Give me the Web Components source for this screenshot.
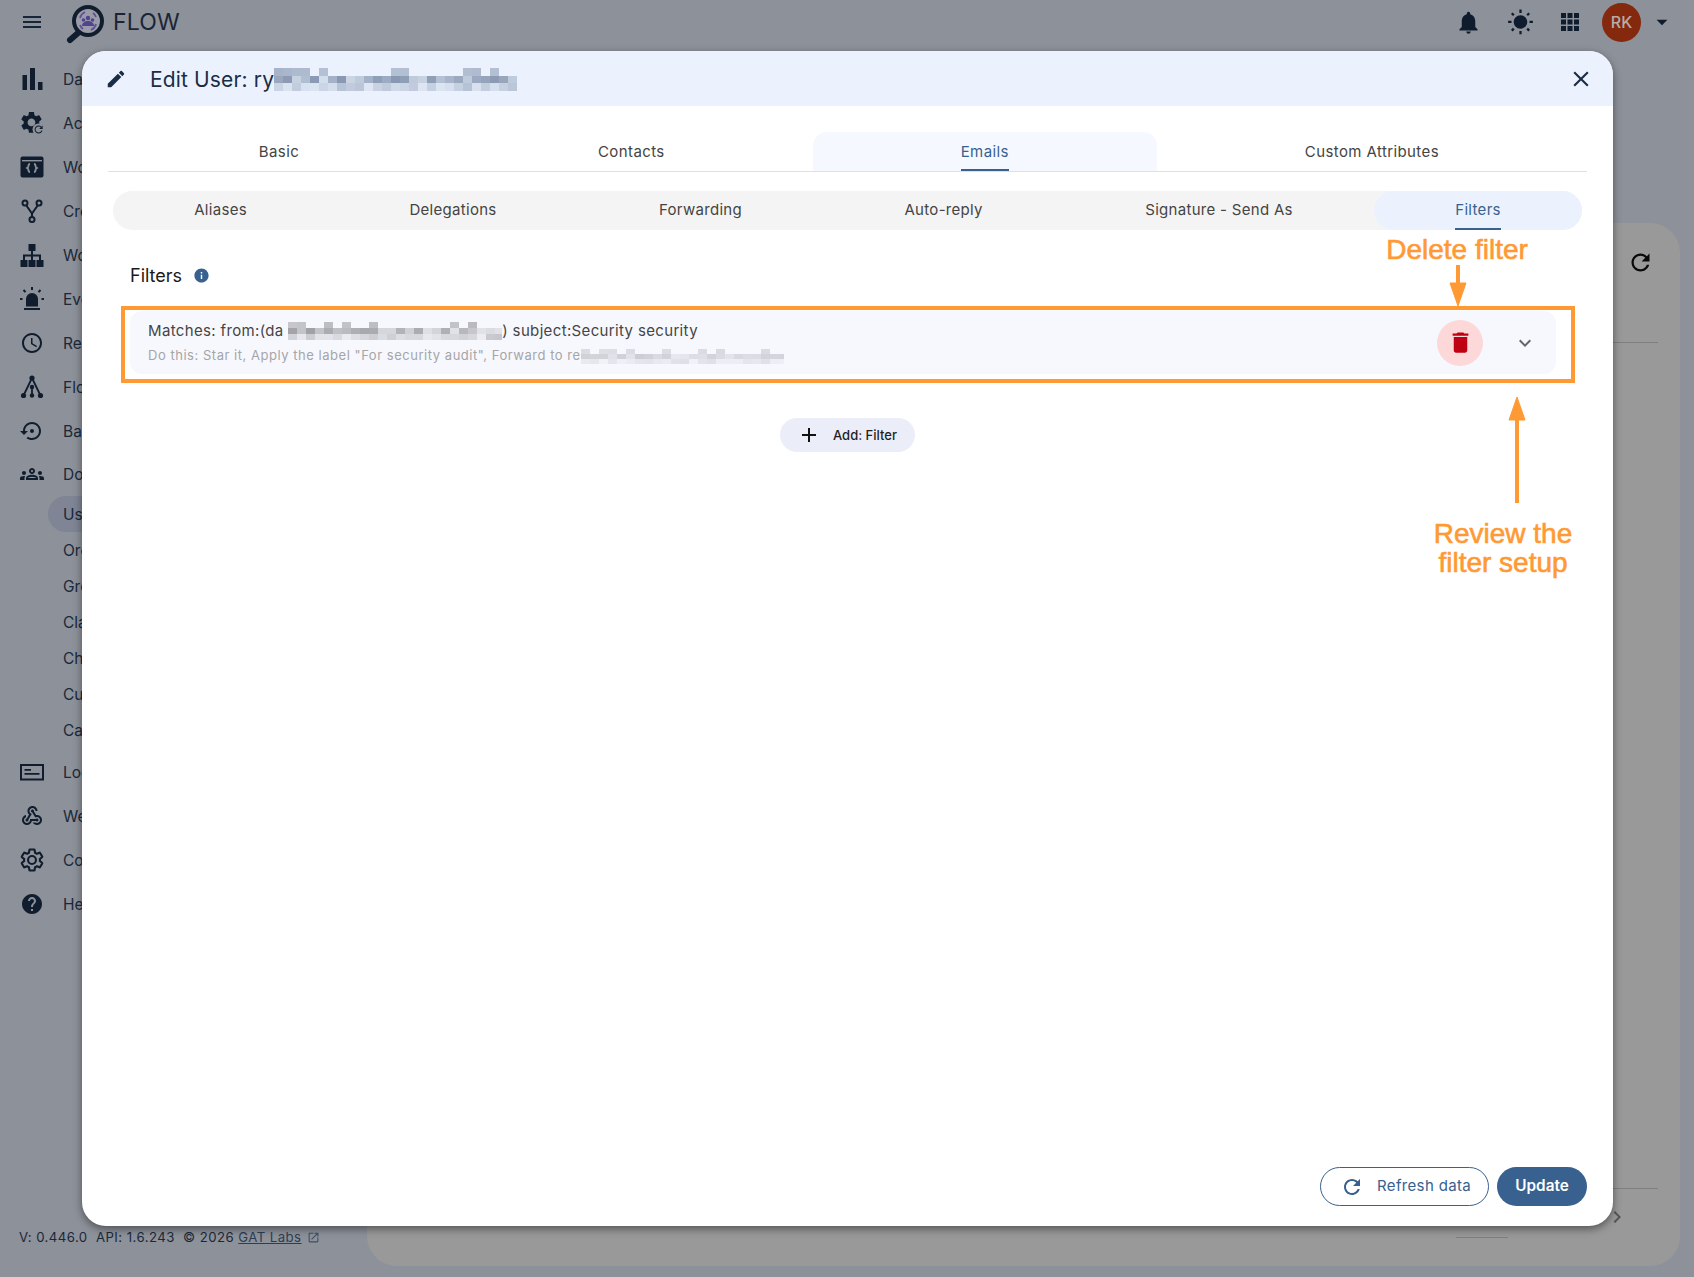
<!DOCTYPE html>
<html>
<head>
<meta charset="utf-8">
<title>FLOW</title>
<style>
html, body { margin: 0; height: 100%; overflow: hidden; background: #8d9199; }
body { font-family: Inter, "Liberation Sans", sans-serif; }
</style>
</head>
<body>
<flow-app>
    <flow-topbar slot="top"></flow-topbar>
    <flow-sidenav slot="side">
        <nav-item icon="bars">Dashboard</nav-item>
        <nav-item icon="gearrefresh">Actions</nav-item>
        <nav-item icon="code">Workflows</nav-item>
        <nav-item icon="fork">Create</nav-item>
        <nav-item icon="org">Workspace</nav-item>
        <nav-item icon="siren">Events</nav-item>
        <nav-item icon="clock">Reports</nav-item>
        <nav-item icon="tree">Flows</nav-item>
        <nav-item icon="restore">Backup</nav-item>
        <nav-item icon="groups" style="margin-top:-1px">Domain</nav-item>
        <nav-item sub active>Users</nav-item>
        <nav-item sub>Org Units</nav-item>
        <nav-item sub>Groups</nav-item>
        <nav-item sub>Classroom</nav-item>
        <nav-item sub>Chrome</nav-item>
        <nav-item sub>Custom</nav-item>
        <nav-item sub>Calendars</nav-item>
        <nav-item icon="logs" style="margin-top:2px">Logs</nav-item>
        <nav-item icon="webhook">Webhooks</nav-item>
        <nav-item icon="gearline">Configuration</nav-item>
        <nav-item icon="help">Help</nav-item>
    </flow-sidenav>
    <back-panel slot="main"></back-panel>
</flow-app>

<edit-dialog>
    <tab-bar items="Basic|Contacts|Emails|Custom Attributes" active="2"></tab-bar>
    <tab-bar pill items="Aliases|Delegations|Forwarding|Auto-reply|Signature - Send As|Filters" active="5"></tab-bar>
    <filter-list></filter-list>
</edit-dialog>

<call-outs></call-outs>

<script>
const ICON_PATHS = {
    menu: 'M3 18h18v-2H3v2zm0-5h18v-2H3v2zm0-7v2h18V6H3z',
    clock: 'M11.99 2C6.47 2 2 6.48 2 12s4.47 10 9.99 10C17.52 22 22 17.52 22 12S17.52 2 11.99 2zM12 20c-4.42 0-8-3.58-8-8s3.58-8 8-8 8 3.58 8 8-3.58 8-8 8zm.5-13H11v6l5.25 3.15.75-1.23-4.5-2.67z',
    restore: 'M14 12c0-1.1-.9-2-2-2s-2 .9-2 2 .9 2 2 2 2-.9 2-2zm-2-9c-4.97 0-9 4.03-9 9H0l4 4 4-4H5c0-3.87 3.13-7 7-7s7 3.13 7 7-3.13 7-7 7c-1.51 0-2.91-.49-4.06-1.3l-1.42 1.44C8.04 20.3 9.94 21 12 21c4.97 0 9-4.03 9-9s-4.03-9-9-9z',
    groups: 'M4,13c1.1,0,2-0.9,2-2c0-1.1-0.9-2-2-2s-2,0.9-2,2C2,12.1,2.9,13,4,13z M5.13,14.1C4.76,14.04,4.39,14,4,14 c-0.99,0-1.93,0.21-2.78,0.58C0.48,14.9,0,15.62,0,16.43V18l4.5,0v-1.61C4.5,15.56,4.73,14.78,5.13,14.1z M20,13c1.1,0,2-0.9,2-2 c0-1.1-0.9-2-2-2s-2,0.9-2,2C18,12.1,18.9,13,20,13z M24,16.43c0-0.81-0.48-1.53-1.22-1.85C21.93,14.21,20.99,14,20,14 c-0.39,0-0.76,0.04-1.13,0.1c0.4,0.68,0.63,1.46,0.63,2.29V18l4.5,0V16.43z M16.24,13.65c-1.17-0.52-2.61-0.9-4.24-0.9 c-1.63,0-3.07,0.39-4.24,0.9C6.68,14.13,6,15.21,6,16.39V18h12v-1.61C18,15.21,17.32,14.13,16.24,13.65z M8.07,16 c0.09-0.23,0.13-0.39,0.91-0.69c0.97-0.38,1.99-0.56,3.02-0.56s2.05,0.18,3.02,0.56c0.77,0.3,0.81,0.46,0.91,0.69H8.07z M12,8 c0.55,0,1,0.45,1,1s-0.45,1-1,1s-1-0.45-1-1S11.45,8,12,8 M12,6c-1.66,0-3,1.34-3,3c0,1.66,1.34,3,3,3s3-1.34,3-3 C15,7.34,13.66,6,12,6L12,6z',
    webhook: 'M10 15h5.88c.27-.31.67-.5 1.12-.5.83 0 1.5.67 1.5 1.5s-.67 1.5-1.5 1.5c-.44 0-.84-.19-1.12-.5H11.9c-.46 2.28-2.48 4-4.9 4-2.76 0-5-2.24-5-5 0-2.42 1.72-4.44 4-4.9v2.07c-1.16.41-2 1.53-2 2.83 0 1.65 1.35 3 3 3s3-1.35 3-3v-1zm2.5-11c1.65 0 3 1.35 3 3h2c0-2.76-2.24-5-5-5s-5 2.24-5 5c0 1.43.6 2.71 1.55 3.62l-2.35 3.9c-.68.14-1.2.75-1.2 1.48 0 .83.67 1.5 1.5 1.5s1.5-.67 1.5-1.5c0-.16-.02-.31-.07-.45l3.38-5.63C10.49 9.61 9.5 8.42 9.5 7c0-1.65 1.35-3 3-3zm4.5 9c-.64 0-1.23.2-1.72.54l-3.05-5.07C11.53 8.35 11 7.74 11 7c0-.83.67-1.5 1.5-1.5S14 6.17 14 7c0 .15-.02.29-.06.43l2.19 3.65c.28-.05.57-.08.87-.08 2.76 0 5 2.24 5 5s-2.24 5-5 5c-1.85 0-3.47-1.01-4.33-2.5h2.67c.48.32 1.05.5 1.66.5 1.65 0 3-1.35 3-3s-1.35-3-3-3z',
    help: 'M12 2C6.48 2 2 6.48 2 12s4.48 10 10 10 10-4.48 10-10S17.52 2 12 2zm1 17h-2v-2h2v2zm2.07-7.75l-.9.92C13.45 12.9 13 13.5 13 15h-2v-.5c0-1.1.45-2.1 1.17-2.83l1.24-1.26c.37-.36.59-.86.59-1.41 0-1.1-.9-2-2-2s-2 .9-2 2H8c0-2.21 1.79-4 4-4s4 1.79 4 4c0 .88-.36 1.68-.93 2.25z',
    bell: 'M12 22c1.1 0 2-.9 2-2h-4c0 1.1.89 2 2 2zm6-6v-5c0-3.07-1.64-5.64-4.5-6.32V4c0-.83-.67-1.5-1.5-1.5s-1.5.67-1.5 1.5v.68C7.63 5.36 6 7.92 6 11v5l-2 2v1h16v-1l-2-2z',
    sun: 'M6.76 4.84l-1.8-1.79-1.41 1.41 1.79 1.79 1.42-1.41zM4 10.5H1v2h3v-2zm9-9.95h-2V3.5h2V.55zm7.45 3.91l-1.41-1.41-1.79 1.79 1.41 1.41 1.79-1.79zm-3.21 13.7l1.79 1.8 1.41-1.41-1.8-1.79-1.4 1.4zM20 10.5v2h3v-2h-3zm-8-5c-3.31 0-6 2.69-6 6s2.69 6 6 6 6-2.69 6-6-2.69-6-6-6zm-1 16.95h2V19.5h-2v2.95zm-7.45-3.91l1.41 1.41 1.79-1.8-1.41-1.41-1.79 1.8z',
    apps: 'M3 3h5v5H3zM9.5 3h5v5h-5zM16 3h5v5h-5zM3 9.5h5v5H3zM9.5 9.5h5v5h-5zM16 9.5h5v5h-5zM3 16h5v5H3zM9.5 16h5v5h-5zM16 16h5v5h-5z',
    caret: 'M7 10l5 5 5-5z',
    pencil: 'M3 17.25V21h3.75L17.81 9.94l-3.75-3.75L3 17.25zM20.71 7.04c.39-.39.39-1.02 0-1.41l-2.34-2.34c-.39-.39-1.02-.39-1.41 0l-1.83 1.83 3.75 3.75 1.83-1.83z',
    close: 'M19 6.41L17.59 5 12 10.59 6.41 5 5 6.41 10.59 12 5 17.59 6.41 19 12 13.41 17.59 19 19 17.59 13.41 12z',
    trash: 'M6 19c0 1.1.9 2 2 2h8c1.1 0 2-.9 2-2V7H6v12zM19 4h-3.5l-1-1h-5l-1 1H5v2h14V4z',
    chevron: 'M16.59 8.59L12 13.17 7.41 8.59 6 10l6 6 6-6z',
    chevronright: 'M8.59 16.59L13.17 12 8.59 7.41 10 6l6 6-6 6z',
    refresh: 'M17.65 6.35C16.2 4.9 14.21 4 12 4c-4.42 0-7.99 3.58-7.99 8s3.57 8 7.99 8c3.73 0 6.84-2.55 7.73-6h-2.08c-.82 2.33-3.04 4-5.65 4-3.31 0-6-2.69-6-6s2.69-6 6-6c1.66 0 3.14.69 4.22 1.78L13 11h7V4l-2.35 2.35z',
    info: 'M12 2C6.48 2 2 6.48 2 12s4.48 10 10 10 10-4.48 10-10S17.52 2 12 2zm1 15h-2v-6h2v6zm0-8h-2V7h2v2z',
    plus: 'M19 13h-6v6h-2v-6H5v-2h6V5h2v6h6v2z',
    open: 'M19 19H5V5h7V3H5c-1.11 0-2 .9-2 2v14c0 1.1.89 2 2 2h14c1.1 0 2-.9 2-2v-7h-2v7zM14 3v2h3.59l-9.83 9.83 1.41 1.41L19 6.41V10h2V3h-7z',
}
const GEAR = 'M19.14 12.94c.04-.3.06-.61.06-.94 0-.32-.02-.64-.07-.94l2.03-1.58c.18-.14.23-.41.12-.61l-1.92-3.32c-.12-.22-.37-.29-.59-.22l-2.39.96c-.5-.38-1.03-.7-1.62-.94l-.36-2.54c-.04-.24-.24-.41-.48-.41h-3.84c-.24 0-.43.17-.47.41l-.36 2.54c-.59.24-1.13.57-1.62.94l-2.39-.96c-.22-.08-.47 0-.59.22L2.74 8.87c-.12.21-.08.47.12.61l2.03 1.58c-.05.3-.09.63-.09.94s.02.64.07.94l-2.03 1.58c-.18.14-.23.41-.12.61l1.92 3.32c.12.22.37.29.59.22l2.39-.96c.5.38 1.03.7 1.62.94l.36 2.54c.05.24.24.41.48.41h3.84c.24 0 .44-.17.47-.41l.36-2.54c.59-.24 1.13-.56 1.62-.94l2.39.96c.22.08.47 0 .59-.22l1.92-3.32c.12-.22.07-.47-.12-.61l-2.01-1.58zM12 15.6c-1.98 0-3.6-1.62-3.6-3.6s1.62-3.6 3.6-3.6 3.6 1.62 3.6 3.6-1.62 3.6-3.6 3.6z'
const BG = '#8d9199'
const ICON_SHAPES = {
    bars: `<path d="M2.5 8H7v15H2.5zM10 1h5v22h-5zM18 15h4.5v8H18z"/>`,
    gearrefresh: `<g transform="translate(-1.5 -1.5) scale(1.08)"><path d="${GEAR}"/></g>
        <circle cx="18.5" cy="18.5" r="6" fill="${BG}"/>
        <g transform="translate(12.6 12.6) scale(.5)"><path d="${ICON_PATHS.refresh}"/></g>`,
    code: `<rect x="0.5" y="1.5" width="23" height="21" rx="2"/>
        <rect x="2" y="5" width="20" height="1.4" fill="${BG}"/>
        <path d="M10 9c-2 0-1.4 2.6-1.9 3.2L7 13l1.1.8c.5.6-.1 3.2 1.9 3.2M14 9c2 0 1.4 2.6 1.9 3.2L17 13l-1.1.8c-.5.6.1 3.2-1.9 3.2" fill="none" stroke="${BG}" stroke-width="1.8"/>`,
    fork: `<g fill="none" stroke="currentColor" stroke-width="2"><circle cx="5" cy="4" r="2.5"/><circle cx="19" cy="4" r="2.5"/><circle cx="12" cy="20.5" r="2.5"/><path d="M6.2 6.2L12 14.5l5.8-8.3M12 14.5V18"/></g>`,
    org: `<path d="M8.5 1h7v7h-7zM.5 17h7v7h-7zM8.5 17h7v7h-7zM16.5 17h7v7h-7z"/><path d="M12 8v9M4 17v-4.5h16V17" fill="none" stroke="currentColor" stroke-width="2"/>`,
    siren: `<path d="M6 19.5V12a6 6 0 0 1 12 0v7.5z"/><rect x="4" y="21" width="16" height="2"/>
        <path d="M12 0v3M3.5 3l2 2.2M20.5 3l-2 2.2M0 12h2.5M21.5 12H24" fill="none" stroke="currentColor" stroke-width="2"/>`,
    tree: `<g><circle cx="12" cy="3" r="2.6"/><circle cx="12" cy="12" r="2.2"/><circle cx="3.5" cy="20.5" r="2.6"/><circle cx="12" cy="20.5" r="2.2"/><circle cx="20.5" cy="20.5" r="2.6"/></g>
        <path d="M12 3L3.5 20.5M12 3l8.5 17.5M12 12v8.5" fill="none" stroke="currentColor" stroke-width="1.8"/>`,
    logs: `<rect x="1" y="5" width="22" height="14.5" fill="none" stroke="currentColor" stroke-width="2"/><path d="M4.5 9H11v1.8H4.5zM4.5 13h15v1.8h-15z"/>`,
    gearline: `<path d="${GEAR}" fill="none" stroke="currentColor" stroke-width="1.9" transform="translate(-1.2 -1.2) scale(1.1)"/>`,
}

class FIcon extends HTMLElement {
    constructor() {
        super()
        this.attachShadow({ mode: 'open' })
    }
    connectedCallback() {
        const name = this.getAttribute('name')
        const size = this.getAttribute('size') || 24
        const inner = ICON_SHAPES[name] || `<path d="${ICON_PATHS[name]}"/>`
        this.shadowRoot.innerHTML = `
            <style>
                :host { display: inline-flex; flex: none; line-height: 0; }
                svg { fill: currentColor; }
            </style>
            <svg width="${size}" height="${size}" viewBox="0 0 24 24">${inner}</svg>`
    }
}
customElements.define('f-icon', FIcon)

// scrambled rectangle standing in for the redacted text
class PixelMask extends HTMLElement {
    constructor() {
        super()
        this.attachShadow({ mode: 'open' })
    }
    connectedCallback() {
        const w = +this.getAttribute('w'), h = +this.getAttribute('h')
        const cw = +this.getAttribute('cw') || 9, ch = +this.getAttribute('ch') || 7.6
        const rgb = this.getAttribute('rgb') || '120,130,150'
        const max = +this.getAttribute('max') || .7
        let seed = +this.getAttribute('seed') || 7
        const rnd = () => (seed = (seed * 16807) % 2147483647) / 2147483647
        for (let i = 0; i < 5; i++) rnd()
        const rows = Math.round(h / ch), cols = Math.round(w / cw)
        let rects = ''
        for (let r = 0; r < rows; r++) {
            for (let c = 0; c < cols; c++) {
                const v = rnd()
                let a = (.22 + v * .78) * max
                if (r === 0 && rows > 2) a = v > .72 ? a * .7 : 0
                if (r === rows - 1 && rows > 2) a *= .55
                rects += `<rect x="${c * cw}" y="${r * ch}" width="${cw}" height="${ch}" fill="rgba(${rgb},${a.toFixed(2)})"/>`
            }
        }
        this.shadowRoot.innerHTML = `
            <style>:host { display: inline-block; vertical-align: middle; line-height: 0; }</style>
            <svg width="${w}" height="${h}" shape-rendering="crispEdges">${rects}</svg>`
    }
}
customElements.define('pixel-mask', PixelMask)

class FlowApp extends HTMLElement {
    constructor() {
        super()
        this.attachShadow({ mode: 'open' })
        this.shadowRoot.innerHTML = `
            <style>
                :host { display: flex; flex-direction: column; height: 100vh; color: #16253a; }
                .row { flex: 1; display: flex; min-height: 0; }
            </style>
            <slot name="top"></slot>
            <div class="row">
                <slot name="side"></slot>
                <slot name="main"></slot>
            </div>`
    }
}
customElements.define('flow-app', FlowApp)

class FlowTopbar extends HTMLElement {
    constructor() {
        super()
        this.attachShadow({ mode: 'open' })
        this.shadowRoot.innerHTML = `
            <style>
                :host { display: flex; align-items: center; height: 44px; padding: 0 19px 0 20px; flex: none; color: #16253a; }
                .logo { margin-left: 19px; margin-right: 8px; width: 42px; height: 44px; }
                .name { font-size: 23px; letter-spacing: .2px; color: #1a2536; }
                .spacer { flex: 1; }
                .tools { display: flex; align-items: center; }
                .bell { color: #0e1c2e; }
                .sun { margin-left: 25px; color: #0e1c2e; }
                .apps { margin-left: 24px; color: #0e1c2e; }
                .avatar { margin-left: 20px; width: 39px; height: 39px; border-radius: 50%; background: #84290e; color: #b9aca7;
                    display: flex; align-items: center; justify-content: center; font-size: 16px; font-weight: 500; }
                .caret { margin-left: 8px; color: #0e1c2e; }
            </style>
            <f-icon name="menu"></f-icon>
            <svg class="logo" viewBox="0 0 42 44">
                <circle cx="25" cy="21" r="14" fill="#9a9aa8" stroke="#101d2e" stroke-width="4"/>
                <path d="M15 33L7 40" stroke="#101d2e" stroke-width="6" stroke-linecap="round"/>
                <path d="M17 18a9 9 0 0 1 5-6M33 24a9 9 0 0 1-5 6M17 25a9 9 0 0 0 3 4M33 17a9 9 0 0 0-3-4" fill="none" stroke="#5a5295" stroke-width="1.8"/>
                <g fill="#4c4590"><circle cx="25" cy="18" r="2.2"/><circle cx="20.5" cy="20" r="1.8"/><circle cx="29.5" cy="20" r="1.8"/><path d="M19 26c0-3 3-5 6-5s6 2 6 5z"/></g>
            </svg>
            <span class="name">FLOW</span>
            <span class="spacer"></span>
            <div class="tools">
                <f-icon class="bell" name="bell" size="27"></f-icon>
                <f-icon class="sun" name="sun" size="27"></f-icon>
                <f-icon class="apps" name="apps" size="24"></f-icon>
                <div class="avatar">RK</div>
                <f-icon class="caret" name="caret" size="26"></f-icon>
            </div>`
    }
}
customElements.define('flow-topbar', FlowTopbar)

class FlowSidenav extends HTMLElement {
    constructor() {
        super()
        this.attachShadow({ mode: 'open' })
        this.shadowRoot.innerHTML = `
            <style>
                :host { display: flex; flex-direction: column; width: 367px; flex: none; padding-top: 13px; box-sizing: border-box; }
                .foot { margin-top: auto; padding: 0 0 32px 19px; font-size: 13.2px; letter-spacing: .45px; color: #1b2839; display: flex; align-items: center; white-space: pre; }
                a { color: #2b3e55; text-decoration: underline; margin-left: 0; }
                f-icon { margin-left: 5px; color: #3d4f68; }
            </style>
            <slot></slot>
            <div class="foot">V: 0.446.0  API: 1.6.243  © 2026 <a>GAT Labs</a><f-icon name="open" size="13"></f-icon></div>`
    }
}
customElements.define('flow-sidenav', FlowSidenav)

class NavItem extends HTMLElement {
    constructor() {
        super()
        this.attachShadow({ mode: 'open' })
    }
    connectedCallback() {
        const icon = this.getAttribute('icon')
        this.shadowRoot.innerHTML = `
            <style>
                :host { display: flex; align-items: center; height: 44px; padding-left: 20px; font-size: 15.5px; color: #1b2839; }
                :host([sub]) { height: 36px; padding-left: 48px; }
                :host([active]) .label { background: #7f8595; }
                .label { display: flex; align-items: center; }
                f-icon { margin-right: 19px; color: #101d2e; }
                :host([sub]) .label { flex: 1; height: 36px; padding-left: 15px; border-radius: 18px 0 0 18px; }
            </style>
            ${icon ? `<f-icon name="${icon}"></f-icon>` : ''}
            <span class="label"><slot></slot></span>`
    }
}
customElements.define('nav-item', NavItem)

class BackPanel extends HTMLElement {
    constructor() {
        super()
        this.attachShadow({ mode: 'open' })
        this.shadowRoot.innerHTML = `
            <style>
                :host { display: flex; flex-direction: column; flex: 1; margin: 179px 14px 11px 0; background: #999; border-radius: 30px; padding: 26px 22px 0 0; box-sizing: border-box; }
                .top { display: flex; justify-content: flex-end; padding-right: 4px; color: #0a0a0a; }
                .rule { height: 1px; background: #7f7f7f; margin-top: 66px; }
                .rest { flex: 1; }
                .foot { height: 49px; border-top: 1px solid #7f7f7f; position: relative; box-sizing: border-box; }
                .foot f-icon { position: absolute; left: 1238px; top: 16px; color: #555; }
                .mark { height: 1px; width: 52px; background: #7f7f7f; margin: 0 150px 28px auto; }
            </style>
            <div class="top"><f-icon name="refresh" size="27"></f-icon></div>
            <div class="rule"></div>
            <div class="rest"></div>
            <div class="foot"><f-icon name="chevronright" size="24"></f-icon></div>
            <div class="mark"></div>`
    }
}
customElements.define('back-panel', BackPanel)

class EditDialog extends HTMLElement {
    constructor() {
        super()
        this.attachShadow({ mode: 'open' })
        this.shadowRoot.innerHTML = `
            <style>
                :host { position: absolute; left: 82px; top: 51px; width: 1531px; height: 1175px; display: flex; flex-direction: column;
                    background: #fff; border-radius: 24px; overflow: hidden; box-shadow: 0 3px 9px rgba(0,0,0,.45); }
                header { display: flex; align-items: center; height: 55px; flex: none; background: #ebf2fd; padding: 0 19px 0 23px; color: #1b2d45; }
                h1 { margin: 1px 0 0 23px; font-size: 21px; font-weight: 400; letter-spacing: .15px; display: flex; align-items: center; flex: 1; }
                pixel-mask { margin-top: 1px; }
                .body { flex: 1; display: flex; flex-direction: column; padding: 26px 26px 0; min-height: 0; }
                footer { display: flex; justify-content: flex-end; gap: 8px; padding: 0 26px 20px; }
                button { font: inherit; height: 39px; border-radius: 20px; box-sizing: border-box; display: flex; align-items: center; padding-top: 0; padding-bottom: 3px; }
                .refresh { width: 169px; border: 1px solid #38618f; background: #fff; color: #38618f; font-size: 15px; letter-spacing: .35px; padding-left: 19px; padding-right: 0; }
                .refresh f-icon { margin-right: 13px; margin-top: 3px; }
                .update { width: 90px; border: 0; background: #38618f; color: #fff; font-size: 15.3px; font-weight: 600; justify-content: center; }
            </style>
            <header>
                <f-icon name="pencil" size="22"></f-icon>
                <h1>Edit User: ry<pixel-mask w="244" h="23" seed="41" rgb="110,128,158" max=".8"></pixel-mask></h1>
                <f-icon name="close" size="26"></f-icon>
            </header>
            <div class="body"><slot></slot></div>
            <footer>
                <button class="refresh"><f-icon name="refresh" size="24"></f-icon>Refresh data</button>
                <button class="update">Update</button>
            </footer>`
    }
}
customElements.define('edit-dialog', EditDialog)

class TabBar extends HTMLElement {
    constructor() {
        super()
        this.attachShadow({ mode: 'open' })
    }
    connectedCallback() {
        const active = +this.getAttribute('active')
        const pill = this.hasAttribute('pill')
        const tabs = this.getAttribute('items').split('|').map((t, i) =>
            `<div class="tab${i === active ? ' on' : ''}"${!pill && i === 0 ? ' style="flex-basis:46px"' : ''}><span>${t}</span></div>`).join('')
        this.shadowRoot.innerHTML = `
            <style>
                :host { display: flex; flex: none; height: 40px; border-bottom: 1px solid #e0e0e0; box-sizing: border-box; font-size: 15px; letter-spacing: .4px; color: #444; }
                :host([pill]) { height: 39px; margin: 19px 5px 0; border: 0; background: #f4f4f4; border-radius: 20px; letter-spacing: .3px; }
                .tab { flex: 1 1 auto; display: flex; justify-content: center; align-items: stretch; }
                span { display: flex; align-items: center; box-sizing: border-box; border-bottom: 2px solid transparent; padding-top: 2px; }
                :host([pill]) span { padding-top: 0; }
                .on { background: #f5f8fe; border-radius: 14px 14px 0 0; color: #38618f; }
                .on span { border-bottom-color: #38618f; }
                :host([pill]) .on { background: #ebf2fd; border-radius: 20px; }
            </style>
            ${tabs}`
    }
}
customElements.define('tab-bar', TabBar)

class FilterList extends HTMLElement {
    constructor() {
        super()
        this.attachShadow({ mode: 'open' })
        this.shadowRoot.innerHTML = `
            <style>
                :host { display: flex; flex-direction: column; align-items: stretch; }
                .title { display: flex; align-items: center; margin: 32px 0 0 22px; height: 26px; font-size: 18px; color: #1a1a1a; }
                .title f-icon { margin-left: 11px; color: #38618f; }
                .card { display: flex; align-items: center; height: 63px; margin: 23px 31px 0 22px; padding: 0 19px 0 18px; background: #f7f8fe; border-radius: 12px; }
                .text { flex: 1; min-width: 0; }
                .l1 { font-size: 15px; letter-spacing: .35px; color: #454545; white-space: nowrap; }
                .l2 { margin-top: 7px; font-size: 13px; letter-spacing: .53px; color: #a5a5a8; white-space: nowrap; }
                .del { width: 46px; height: 46px; border-radius: 50%; background: #fdd8d8; color: #bf0013; display: flex; align-items: center; justify-content: center; }
                .more { margin: 0 0 0 30px; color: #666; display: flex; }
                .add { align-self: center; margin-top: 44px; width: 135px; height: 34px; border-radius: 17px; background: #ebedf9; color: #1f1f1f; font-size: 13px; font-weight: 500; display: flex; align-items: center; box-sizing: border-box; padding-left: 17px; }
                .add f-icon { margin-right: 12px; color: #111; }
            </style>
            <div class="title">Filters<f-icon name="info" size="17"></f-icon></div>
            <div class="card">
                <div class="text">
                    <div class="l1">Matches: from:(da <pixel-mask w="214" h="18" cw="9" ch="6" seed="17" rgb="110,110,115" max=".65"></pixel-mask>) subject:Security security</div>
                    <div class="l2">Do this: Star it, Apply the label "For security audit", Forward to re<pixel-mask w="203" h="15" cw="9" ch="5" seed="91" rgb="140,140,150" max=".4"></pixel-mask></div>
                </div>
                <div class="del"><f-icon name="trash" size="27"></f-icon></div>
                <div class="more"><f-icon name="chevron" size="24"></f-icon></div>
            </div>
            <div class="add"><f-icon name="plus" size="24"></f-icon>Add: Filter</div>`
    }
}
customElements.define('filter-list', FilterList)

// orange help marks laid over the finished screenshot
class CallOuts extends HTMLElement {
    constructor() {
        super()
        this.attachShadow({ mode: 'open' })
        this.shadowRoot.innerHTML = `
            <style>
                :host { position: absolute; inset: 0; pointer-events: none; color: #ff9933; font-family: "Liberation Sans", Arial, sans-serif; font-size: 28px; -webkit-text-stroke: .6px #ff9933; }
                .box { position: absolute; left: 121px; top: 306px; width: 1454px; height: 77px; box-sizing: border-box; border: 4px solid #ff9933; }
                .t { position: absolute; text-align: center; line-height: 29px; white-space: nowrap; }
                .del { left: 1377px; top: 235px; width: 160px; }
                .rev { left: 1413px; top: 519px; width: 180px; }
                svg { position: absolute; left: 0; top: 0; }
            </style>
            <div class="box"></div>
            <div class="t del">Delete filter</div>
            <div class="t rev">Review the<br>filter setup</div>
            <svg width="1694" height="1277" fill="#ff9933" stroke="#ff9933">
                <path d="M1458 265V285" stroke-width="4"/>
                <path d="M1450 283h16l-8 23z"/>
                <path d="M1517 503V418" stroke-width="4"/>
                <path d="M1509 420h16l-8-23z"/>
            </svg>`
    }
}
customElements.define('call-outs', CallOuts)
</script>
</body>
</html>
